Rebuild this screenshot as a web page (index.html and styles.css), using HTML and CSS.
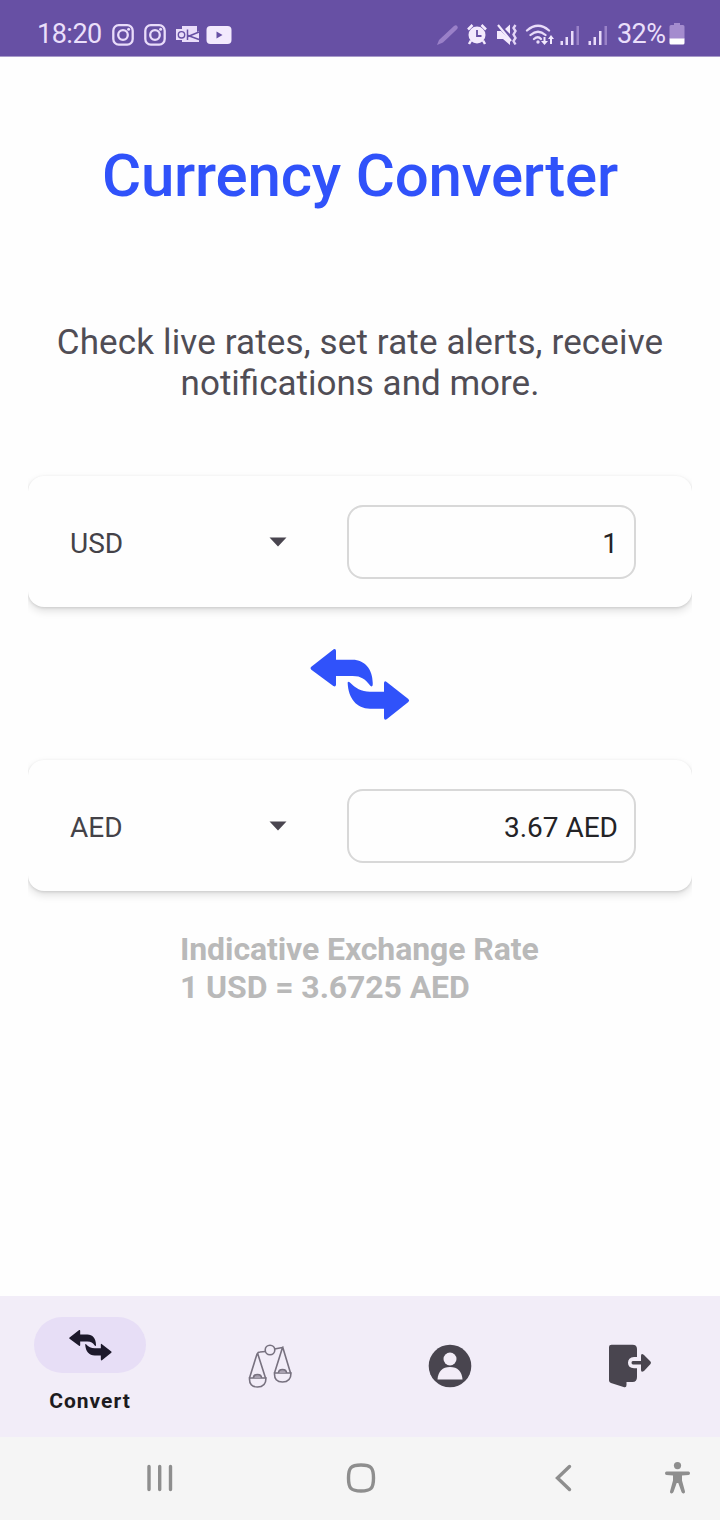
FILE: index.html
```html
<!DOCTYPE html>
<html lang="en">
<head>
<meta charset="utf-8">
<title>Currency Converter</title>
<link rel="stylesheet" href="styles.css">
</head>
<body>
<svg class="defs" width="0" height="0" aria-hidden="true">
  <symbol id="swap" viewBox="60 50 300 222">
    <path d="M64 109 131 57Q137 53 138 61V88H188C226 88 251 120 248 165Q246 171 241 166C226 147 214 137 188 137H138V163Q137 171 130 167L64 118Q59 113 64 109Z"/>
    <path d="M355 206 290 155Q283 150 282 158V184H240C214 184 196 174 179 156Q173 151 173 158C175 204 200 235 240 235H282V263Q283 271 290 267L355 215Q360 210 355 206Z"/>
  </symbol>
</svg>
<div class="screen">
  <header class="status">
    <div class="status-left">
      <span class="clock">18:20</span>
      <svg class="notices" width="122" height="26" viewBox="0 0 122 26">
        <g fill="none" stroke="#e9dcfa" stroke-width="2.3">
          <rect x="2.3" y="3.2" width="19.4" height="19.4" rx="5.5"/><circle cx="12" cy="13" r="4.8"/>
          <rect x="34.3" y="3.2" width="19.4" height="19.4" rx="5.5"/><circle cx="44" cy="13" r="4.8"/>
        </g>
        <g fill="#e9dcfa"><circle cx="17.6" cy="7.3" r="1.5"/><circle cx="49.6" cy="7.3" r="1.5"/></g>
        <path fill="#e9dcfa" d="M71 4h15v6l2-1v11H71v-2h-6V7h6z"/>
        <path fill="none" stroke="#6750a4" stroke-width="1.500" d="M76.500 7.500V18M77 13.500l11 4M77 14.500l11-4.500"/>
        <circle cx="70.500" cy="12.800" r="3.200" fill="none" stroke="#6750a4" stroke-width="1.400"/>
        <rect x="95.500" y="4" width="25" height="18" rx="4" fill="#f3eafd"/><path fill="#6750a4" d="M105.500 9.500v7l6-3.500z"/>
      </svg>
    </div>
    <div class="status-right">
      <svg width="174" height="26" viewBox="0 0 174 26">
        <path fill="#9a80c8" d="M1 23l2-5L18 4q2-1.500 3.200 0t0 3L7 20.500z"/>
        <g transform="translate(31 0)">
          <circle cx="10" cy="13" r="8.500" fill="#f3eafd"/>
          <path d="M1 7.500l4.500-4.500M14.500 3l4.500 4.500M4 18.500l-2 3.500M16 18.500l2 3.500" stroke="#f3eafd" stroke-width="2.500" fill="none"/>
          <path d="M10 8v6h4.500" stroke="#6750a4" stroke-width="1.800" fill="none"/>
        </g>
        <g transform="translate(61 0)">
          <path fill="#f3eafd" d="M0 9h4l9 9v5l-7-6H0zM8 7l5-4.500V12z"/>
          <path stroke="#f3eafd" stroke-width="2.200" d="M1 3l13 16"/>
          <path fill="none" stroke="#e3d5f6" stroke-width="2.400" d="M18.500 3l-2 3 2 3-2 3.500 2 3.500-2 3 2 3.500"/>
        </g>
        <g fill="none" stroke="#e9dcfa" stroke-width="2.300" stroke-linecap="round">
          <path d="M91 8.500q11-9.500 22 0M94.500 13q7.500-6.500 15 0M98 17q4-3.500 7 0"/>
        </g>
        <circle cx="102" cy="20" r="1.700" fill="#e9dcfa"/>
        <path fill="#f3eafd" d="M107.500 15h2v4h2.500l-3.500 4-3.500-4h2.500zM114 22h2v-5h2l-3-4-3 4h2z"/>
        <g fill="#e9dcfa">
          <path d="M124.500 19h2.500v4h-2.500zM129.500 15h2.500v8h-2.500zM135 9h2.500v14H135zM152.500 19h2.500v4h-2.500zM157.500 15h2.500v8h-2.500zM163 9h2.500v14H163z"/>
          <path fill="#9a82c8" d="M140.500 4h2.500v19h-2.500zM168.500 4h2.500v19h-2.500z"/>
        </g>
      </svg>
      <span class="percent">32%</span>
      <svg class="battery" width="16" height="24" viewBox="0 0 16 24">
        <path fill="#a48cce" d="M5 1h6v2h3q1.500 0 1.500 1.500V17H.500V4.500Q.500 3 2 3h3z"/>
        <path fill="#fff" d="M.500 16.500h15V21q0 1.500-1.500 1.500H2Q.500 22.500.500 21z"/>
      </svg>
    </div>
  </header>

  <main class="content">
    <h1 class="title">Currency Converter</h1>
    <p class="subtitle"><span class="line-one">Check live rates, set rate alerts, receive</span><br><span class="line-two">notifications and more.</span></p>
    <section class="slot">
      <div class="card">
        <span class="code">USD</span>
        <svg class="caret" width="18" height="10" viewBox="0 0 18 10"><path d="M.500.500h17L9 9.500z"/></svg>
        <div class="field">1</div>
      </div>
    </section>
    <svg class="swap" width="100" height="74"><use href="#swap"/></svg>
    <section class="slot">
      <div class="card">
        <span class="code">AED</span>
        <svg class="caret" width="18" height="10" viewBox="0 0 18 10"><path d="M.500.500h17L9 9.500z"/></svg>
        <div class="field">3.67 AED</div>
      </div>
    </section>
    <p class="rate">Indicative Exchange Rate<br>1 USD = 3.6725 AED</p>
  </main>

  <nav class="tabs">
    <a class="tab active">
      <span class="pill"><svg width="43" height="32"><use href="#swap"/></svg></span>
      <span class="label">Convert</span>
    </a>
    <a class="tab">
      <svg width="44" height="44" viewBox="0 0 44 44" fill="none" stroke="#77717f" stroke-width="1.600">
        <circle cx="22" cy="6" r="4.800"/>
        <path d="M17.500 7.500 12 8Q10 8 9 10L1.500 34M9.500 9l8 25M26.500 5l8-1.500-8 25.500M34.500 2.500l8 26.500"/>
        <path d="M1.500 34h16.500q0 9-8.500 9T1.500 34zM26.500 29H43q0 9-8.500 9T26.500 29z"/>
        <path d="M5.500 34q0-3.500 4-3.500t4 3.500M30.500 29q0-3.500 4-3.500t4 3.500" fill="#a8a1b0"/>
      </svg>
    </a>
    <a class="tab">
      <svg width="44" height="44" viewBox="0 0 44 44">
        <circle cx="22" cy="22" r="21.300" fill="#49454f"/>
        <circle cx="22" cy="15" r="6.500" fill="#f3edf7"/>
        <path fill="#f3edf7" d="M9.500 35.500Q10.500 23 22 23t12.500 12.500z"/>
      </svg>
    </a>
    <a class="tab">
      <svg width="44" height="44" viewBox="0 0 44 44" fill="#49454f">
        <path d="M3.500.700H24.500Q29 .700 29 5V13H26Q20 13.500 20 18.800T26 24.200H29V33Q29 38 24.500 38H18.500V41Q18.500 44 15.500 43L3 39Q1 38 1 36.500V3Q1 .700 3.500.700Z"/>
        <path d="M25 17H33V12Q33 8.500 36 11L42.500 17.500Q43.500 18.500 42.500 20L36 27Q33 29 33 26V20.500H25Q23.500 20.500 23.500 18.700T25 17Z"/>
      </svg>
    </a>
  </nav>

  <footer class="system">
    <svg class="recents" width="28" height="32" viewBox="0 0 28 32"><path d="M3 4.500v23M13.700 4.500v23M24.500 4.500v23"/></svg>
    <svg class="home" width="30" height="34" viewBox="0 0 30 34"><path d="M15 4C25 4 27.500 6.500 27.500 17S25 30 15 30 2.500 27.500 2.500 17 5 4 15 4Z"/></svg>
    <svg class="back" width="18" height="32" viewBox="0 0 18 32"><path d="M15.500 4.500 3.500 16l12 11.500"/></svg>
    <svg class="access" width="28" height="36" viewBox="0 0 28 36">
      <circle cx="13.500" cy="5.600" r="3.600"/>
      <path d="M2.500 11.500h22q1.500 0 1.500 1.700t-1.500 1.800l-6.500.5v5l3 11q.2 1.500-1.200 1.900-1.800.2-2.300-1.400L14.300 23h-1.600L9.500 32q-.6 1.600-2.300 1.400-1.500-.4-1.200-1.900l3-11v-5L2.500 15Q1 14.800 1 13.200T2.500 11.500Z"/>
    </svg>
  </footer>
</div>
</body>
</html>
```

FILE: styles.css
```css
* { box-sizing: border-box; }
body { margin: 0; font-family: Roboto, "Noto Sans", sans-serif; background: #fefefe; }
svg { display: block; flex: none; }
.defs { position: absolute; }
.screen { width: 720px; height: 1520px; display: flex; flex-direction: column; background: #fefefe; overflow: hidden; }

.status { height: 57px; flex: none; background: #6750a4; border-bottom: 1px solid #a79ac9; display: flex; justify-content: space-between; padding: 10px 35px 0 37px; color: #eadffa; font-size: 27px; line-height: 49px; }
.status-left, .status-right { display: flex; align-items: flex-start; }
.clock { width: 65px; letter-spacing: -0.5px; }
.status svg { margin-top: 12px; }
.notices { margin-left: 9px; }
.percent { margin-left: 7px; letter-spacing: -0.6px; width: 52px; }

.content { flex: 1; display: flex; flex-direction: column; }
.title { margin: 83px 0 0; font-size: 60px; line-height: 71px; font-weight: 500; letter-spacing: -0.2px; text-align: center; color: #3052fa; white-space: nowrap; }
.subtitle { margin: 111px 0 0; font-size: 35px; line-height: 41px; text-align: center; color: #504d55; white-space: nowrap; }
.line-one { letter-spacing: 0.14px; }
.slot { margin: 46px 28px 0; padding: 26px 0 24px; overflow: hidden; }
.card { height: 131px; border-radius: 16px; background: #fefefe; box-shadow: 0 4px 8px rgba(0,0,0,.12), 0 1px 3px rgba(0,0,0,.12); display: flex; align-items: center; padding: 0 56px 0 42px; }
.code { width: 199px; font-size: 28px; color: #444248; line-height: 34px; padding-top: 4px; }
.caret { fill: #49454f; margin-top: 1px; }
.field { width: 289px; height: 74px; margin-left: auto; border: 2px solid #d8d8d8; border-radius: 16px; padding: 1px 16px 0; font-size: 28px; line-height: 71px; text-align: right; color: #242326; }
.swap { margin: 16px 0 0 310px; fill: #3052fa; }
.swap + .slot { margin-top: 13px; }
.rate { margin: 15px 0 0 180px; font-size: 32px; line-height: 38px; font-weight: 700; letter-spacing: -0.1px; color: #b9b9b9; white-space: nowrap; }

.tabs { height: 141px; flex: none; background: #f2edf8; display: grid; grid-template-columns: repeat(4, 180px); }
.tab { display: flex; flex-direction: column; align-items: center; justify-content: center; padding-bottom: 2px; }
.active { justify-content: flex-start; padding-top: 21px; }
.pill { width: 112px; height: 56px; border-radius: 28px; background: #e7def6; display: flex; align-items: center; justify-content: center; fill: #1d192b; }
.label { margin-top: 15px; font-size: 21px; line-height: 26px; font-weight: 700; letter-spacing: 1px; color: #1d1b20; }

.system { height: 83px; flex: none; background: #f5f5f5; display: flex; align-items: center; padding: 0 0 2px 146px; }
.system path { fill: none; stroke: #8e8e8e; stroke-width: 3.4; stroke-linecap: round; }
.home { margin-left: 172px; }
.back { margin-left: 178px; }
.access { margin-left: 92px; fill: #8e8e8e; }
.system .access path { fill: #8e8e8e; stroke: none; }
```
